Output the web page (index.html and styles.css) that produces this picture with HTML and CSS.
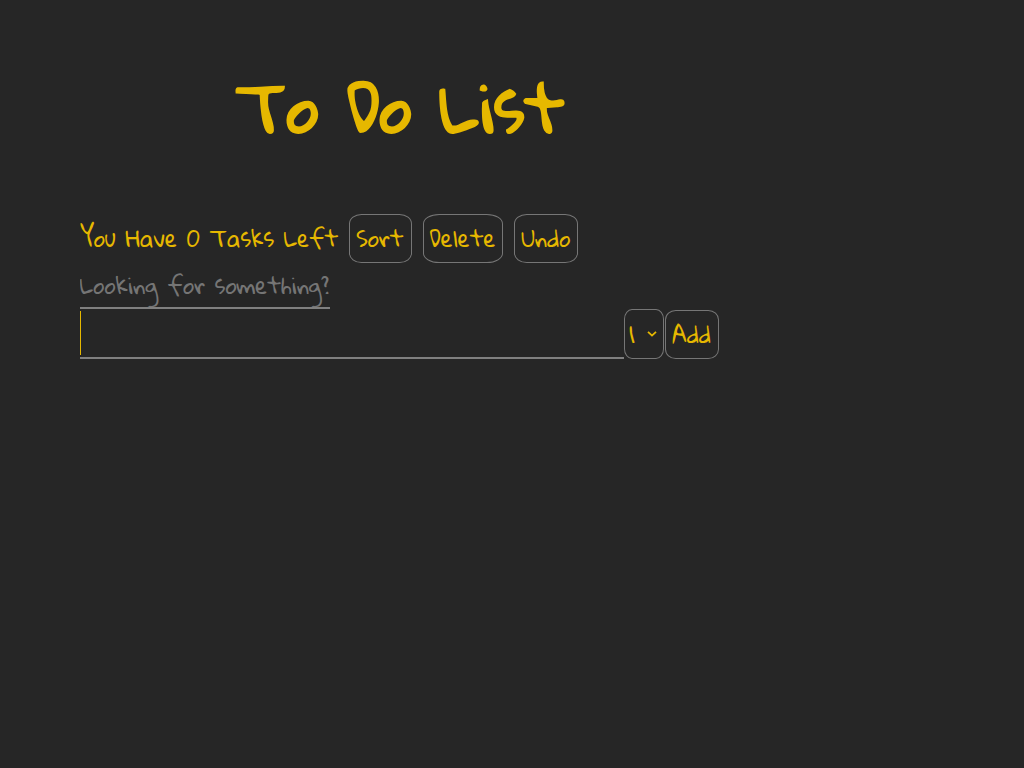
FILE: index.html
```html
<!DOCTYPE html>
<html lang="en">
<head>
<meta charset="utf-8">
<title>To Do List</title>
<link rel="stylesheet" href="styles.css">
</head>
<body>
<main class="app">
  <h1 class="title">To Do List</h1>
  <div class="toolbar">
    <p class="count">You Have 0 Tasks Left</p>
    <button class="btn" type="button">Sort</button>
    <button class="btn" type="button">Delete</button>
    <button class="btn" type="button">Undo</button>
  </div>
  <input class="search" type="text" aria-label="Search tasks" placeholder="Looking for something?">
  <form class="add-form">
    <input class="task" type="text" aria-label="New task" autofocus>
    <select class="priority" aria-label="Priority">
      <option>1</option><option>2</option><option>3</option><option>4</option><option>5</option>
    </select>
    <button class="btn" type="submit">Add</button>
  </form>
</main>
</body>
</html>
```

FILE: styles.css
```css
* {
  box-sizing: border-box;
}

body {
  margin: 0;
  background: #262626;
  color: #e6b800;
  font-family: "Gloria Hallelujah", "Reenie Beanie", "Nanum Pen Script", "Open Sans", sans-serif;
  font-size: 22px;
}

.app {
  max-width: 800px;
  padding: 55px 80px;
}

.title {
  margin: 0;
  font-size: 64px;
  line-height: 104px;
  text-align: center;
}

.toolbar {
  display: flex;
  align-items: center;
  gap: 11px;
  margin-top: 55px;
}

.count {
  margin: 0;
  padding-bottom: 2px;
}

.btn,
.search,
.task,
.priority {
  font: inherit;
  color: inherit;
  background: transparent;
}

.btn,
.priority {
  height: 49px;
  padding: 0 7px 2px 6px;
  border: 1px solid #767676;
  border-radius: 20%;
}

.priority {
  appearance: none;
  width: 40px;
  height: 50px;
  padding: 0 16px 0 4px;
  background: url("data:image/svg+xml,%3Csvg xmlns='http://www.w3.org/2000/svg' width='10' height='6' viewBox='0 0 10 6'%3E%3Cpath d='M1 .8 5 4.6 9 .8' fill='none' stroke='%23e6b800' stroke-width='1.8'/%3E%3C/svg%3E") right 6px center no-repeat;
}

.search,
.task {
  border: 0;
  border-bottom: 2px solid #808080;
  border-radius: 0;
  padding: 0;
  outline: none;
}

.search {
  display: block;
  width: 250px;
  height: 46px;
}

.search::placeholder {
  color: #757575;
}

.add-form {
  display: flex;
  align-items: flex-end;
}

.add-form .btn {
  margin: 0 1px;
}

.task {
  flex: 1;
  min-width: 0;
  height: 50px;
}

.task:focus {
  caret-color: transparent;
  background: linear-gradient(#e6b800, #e6b800) 0 2px / 1px 44px no-repeat;
}
```
